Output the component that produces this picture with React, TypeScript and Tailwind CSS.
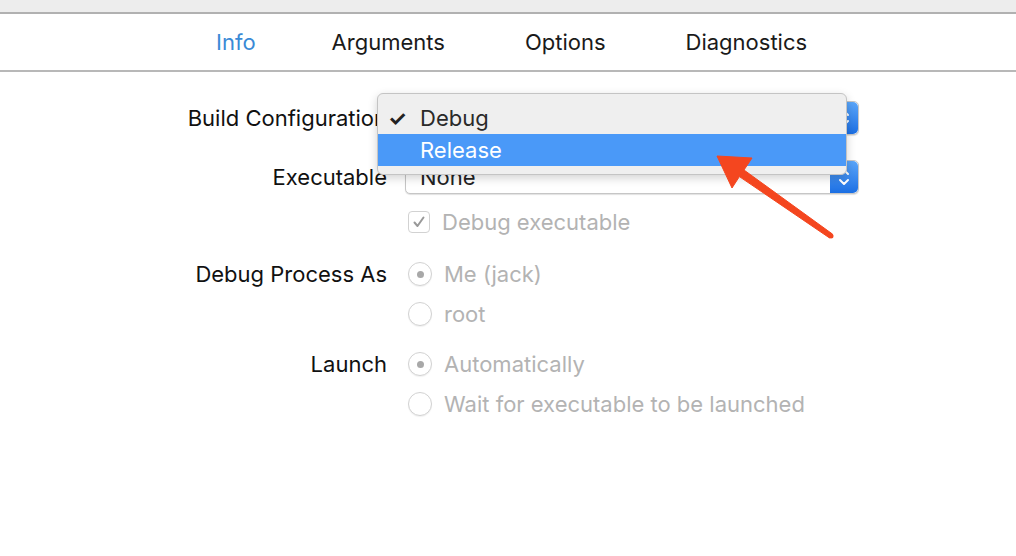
import React from "react";

const font = { fontFamily: "Inter, 'Liberation Sans', sans-serif" };

function Stepper() {
  return (
    <div className="w-[28px] h-full rounded-r-[5px] bg-gradient-to-b from-[#5aa6fa] to-[#1b6fe3] flex items-center justify-center">
      <svg width="14" height="22" viewBox="0 0 14 22" fill="none" stroke="white" strokeWidth="2" strokeLinecap="round" strokeLinejoin="round">
        <path d="M3 8 L7 4 L11 8" />
        <path d="M3 14 L7 18 L11 14" />
      </svg>
    </div>
  );
}

function SelectBox({ text }: { text: string }) {
  return (
    <div className="flex h-[34px] w-[454px] rounded-[5px] border border-[#c6c6c6] bg-white shadow-[0_1px_1px_rgba(0,0,0,0.12)]">
      <div className="flex-1 flex items-center pl-[14px] text-[22px] text-[#222]">{text}</div>
      <Stepper />
    </div>
  );
}

function Radio({ on }: { on?: boolean }) {
  return (
    <div className="w-[24px] h-[24px] rounded-full border border-[#d2d2d2] bg-white flex items-center justify-center shadow-[0_1px_1px_rgba(0,0,0,0.06)]">
      {on && <div className="w-[7px] h-[7px] rounded-full bg-[#a8a8a8]" />}
    </div>
  );
}

function Row({ label, children, h = 30 }: { label?: string; children: React.ReactNode; h?: number }) {
  return (
    <div className="flex items-center" style={{ height: h }}>
      <div className="w-[387px] shrink-0 text-right text-[22px] text-[#111] whitespace-nowrap">{label}</div>
      <div className="ml-[18px] flex items-center">{children}</div>
    </div>
  );
}

export default function App() {
  return (
    <div className="relative w-[1016px] h-[556px] overflow-hidden bg-white" style={font}>
      <div className="h-[12px] bg-[#ededed]" />
      <div className="h-[2px] bg-[#b1b1b1]" />
      <div className="h-[56px] flex items-center pl-[216px] text-[22px] text-[#1a1a1a]">
        <span className="text-[#3a8ad6]">Info</span>
        <span className="ml-[76px]">Arguments</span>
        <span className="ml-[80px]">Options</span>
        <span className="ml-[80px]">Diagnostics</span>
      </div>
      <div className="h-[2px] bg-[#b8b8b8]" />

      <div className="pt-[29px]">
        <Row label="Build Configuration" h={34}>
          <SelectBox text="Debug" />
        </Row>
        <div className="h-[25px]" />
        <Row label="Executable" h={34}>
          <SelectBox text="None" />
        </Row>
        <div className="h-[13px]" />
        <Row h={30}>
          <div className="ml-[3px] flex items-center gap-[12px] text-[22px] text-[#b3b3b3]">
            <div className="w-[22px] h-[22px] rounded-[4px] border border-[#d2d2d2] bg-white flex items-center justify-center">
              <svg width="14" height="14" viewBox="0 0 14 14" fill="none" stroke="#999" strokeWidth="2" strokeLinecap="round" strokeLinejoin="round">
                <path d="M2.5 7.5 L5.5 11 L11.5 2.5" />
              </svg>
            </div>
            <span>Debug executable</span>
          </div>
        </Row>
        <div className="h-[22px]" />
        <Row label="Debug Process As">
          <div className="ml-[3px] flex items-center gap-[12px] text-[22px] text-[#b3b3b3]">
            <Radio on />
            <span>Me (jack)</span>
          </div>
        </Row>
        <div className="h-[10px]" />
        <Row>
          <div className="ml-[3px] flex items-center gap-[12px] text-[22px] text-[#b3b3b3]">
            <Radio />
            <span>root</span>
          </div>
        </Row>
        <div className="h-[20px]" />
        <Row label="Launch">
          <div className="ml-[3px] flex items-center gap-[12px] text-[22px] text-[#b3b3b3]">
            <Radio on />
            <span>Automatically</span>
          </div>
        </Row>
        <div className="h-[10px]" />
        <Row>
          <div className="ml-[3px] flex items-center gap-[12px] text-[22px] text-[#b3b3b3]">
            <Radio />
            <span>Wait for executable to be launched</span>
          </div>
        </Row>
      </div>

      {/* popup menu overlay */}
      <div className="absolute left-[377px] top-[93px] w-[470px] h-[82px] rounded-[6px] border border-[#c4c4c4] bg-[#efefef] shadow-[0_3px_10px_rgba(0,0,0,0.18)] pt-[9px]">
        <div className="h-[31px] flex items-center text-[22px] text-[#2a2a2a]">
          <span className="w-[42px] pl-[10px] text-[21px] font-bold text-[#222]">✓</span>
          <span>Debug</span>
        </div>
        <div className="h-[32px] flex items-center bg-[#4a99f8] text-[22px] text-white">
          <span className="w-[42px]" />
          <span>Release</span>
        </div>
      </div>

      {/* arrow */}
      <svg className="absolute left-0 top-0" width="1016" height="556" viewBox="0 0 1016 556">
        <polygon
          points="717,156 752,158 744,170 832.4,234 829.6,238 739.4,176.6 732,188"
          fill="#f4461f"
          stroke="#f4461f"
          strokeWidth="1"
          strokeLinejoin="round"
        />
        <circle cx="831" cy="236" r="2.5" fill="#f4461f" />
      </svg>
    </div>
  );
}
